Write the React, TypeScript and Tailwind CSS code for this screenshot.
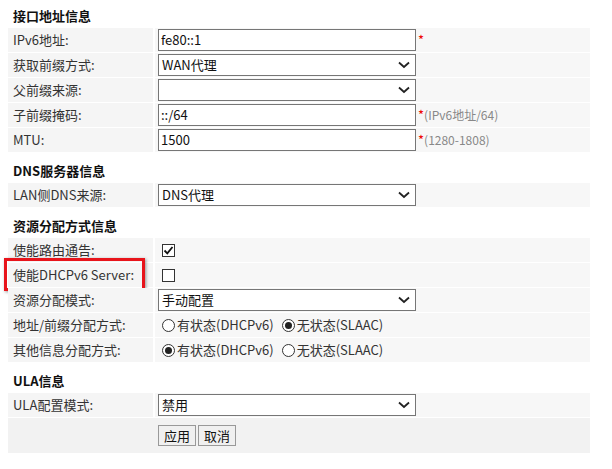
const font = { fontFamily: '"Noto Sans CJK SC", "Noto Sans", sans-serif' };

function Row({ label, children, highlight }: { label: string; children: React.ReactNode; highlight?: boolean }) {
  return (
    <div className="flex h-[25px] gap-[2px] border-b border-white">
      <div className="relative flex w-[145px] items-center bg-[#f5f5f5] pl-[5px] text-[13px] text-[#333]">
        {label}
        {highlight && (
          <div className="absolute left-[-4px] top-[-5px] h-[33px] w-[141px] border-[3px] border-[#e8141b] shadow-[1px_1px_3px_rgba(0,0,0,0.4)]" />
        )}
      </div>
      <div className="flex flex-1 items-center bg-[#f7f7f7] pl-[3px] text-[13px] text-[#333]">{children}</div>
    </div>
  );
}

function Input({ value }: { value: string }) {
  return (
    <div className="flex h-[22px] w-[258px] items-center border border-[#767676] bg-white px-[2px] text-[13px] text-[#111]">
      {value}
    </div>
  );
}

function Select({ value }: { value: string }) {
  return (
    <div className="flex h-[22px] w-[258px] items-center justify-between border border-[#767676] bg-white px-[3px] text-[13px] text-[#111]">
      <span>{value}</span>
      <svg width="12" height="8" viewBox="0 0 12 8" className="mr-[2px]">
        <path d="M1 1.5 L6 6 L11 1.5" stroke="#222" strokeWidth="1.8" fill="none" />
      </svg>
    </div>
  );
}

function Req({ hint }: { hint?: string }) {
  return (
    <>
      <span className="ml-[2px] text-[#e00]">*</span>
      {hint && <span className="text-[12px] text-[#888]">{hint}</span>}
    </>
  );
}

function Check({ on }: { on?: boolean }) {
  return (
    <div className="ml-[4px] flex h-[13px] w-[13px] items-center justify-center border border-[#333] bg-white">
      {on && (
        <svg width="11" height="11" viewBox="0 0 11 11">
          <path d="M1.5 5.5 L4.3 8.3 L9.5 2" stroke="#111" strokeWidth="1.8" fill="none" />
        </svg>
      )}
    </div>
  );
}

function Radio({ on, label }: { on?: boolean; label: string }) {
  return (
    <span className="mr-[4px] flex items-center gap-[2px]">
      <span className="ml-[4px] flex h-[13px] w-[13px] items-center justify-center rounded-full border border-[#333] bg-white">
        {on && <span className="h-[7px] w-[7px] rounded-full bg-[#222]" />}
      </span>
      {label}
    </span>
  );
}

function Title({ children }: { children: React.ReactNode }) {
  return <div className="flex h-[28px] items-end pb-[3px] pl-[5px] text-[13px] font-bold text-[#111]">{children}</div>;
}

export default function App() {
  return (
    <div className="h-[469px] w-[612px] bg-white pl-[8px] pr-[22px]" style={font}>
      <Title>接口地址信息</Title>
      <Row label="IPv6地址:"><Input value="fe80::1" /><Req /></Row>
      <Row label="获取前缀方式:"><Select value="WAN代理" /></Row>
      <Row label="父前缀来源:"><Select value="" /></Row>
      <Row label="子前缀掩码:"><Input value="::/64" /><Req hint="(IPv6地址/64)" /></Row>
      <Row label="MTU:"><Input value="1500" /><Req hint="(1280-1808)" /></Row>
      <div className="h-[2px]" />
      <Title>DNS服务器信息</Title>
      <Row label="LAN侧DNS来源:"><Select value="DNS代理" /></Row>
      <div className="h-[2px]" />
      <Title>资源分配方式信息</Title>
      <Row label="使能路由通告:"><Check on /></Row>
      <Row label="使能DHCPv6 Server:" highlight><Check /></Row>
      <Row label="资源分配模式:"><Select value="手动配置" /></Row>
      <Row label="地址/前缀分配方式:"><Radio label="有状态(DHCPv6)" /><Radio on label="无状态(SLAAC)" /></Row>
      <Row label="其他信息分配方式:"><Radio on label="有状态(DHCPv6)" /><Radio label="无状态(SLAAC)" /></Row>
      <div className="h-[2px]" />
      <Title>ULA信息</Title>
      <Row label="ULA配置模式:"><Select value="禁用" /></Row>
      <div className="flex h-[35px] items-center gap-[2px] bg-[#f2f2f2] pl-[150px]">
        <button className="h-[21px] border border-[#999] bg-[#f0f0f0] px-[5px] text-[13px] text-[#111]">应用</button>
        <button className="h-[21px] border border-[#999] bg-[#f0f0f0] px-[5px] text-[13px] text-[#111]">取消</button>
      </div>
    </div>
  );
}
